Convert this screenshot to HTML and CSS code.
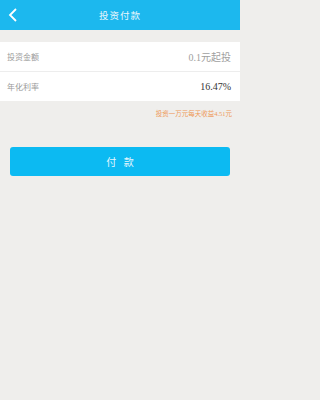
FILE: index.html
```html
<!DOCTYPE html>
<html lang="zh">
<head>
<meta charset="utf-8">
<link rel="stylesheet" href="styles.css">
</head>
<body>
<div class="header">
  <svg class="back" width="12" height="16" viewBox="0 0 12 16"><path d="M9 2 L3 8 L9 14" fill="none" stroke="#fff" stroke-width="1.8"/></svg>
  <div class="title">投资付款</div>
</div>
<div class="list">
  <div class="row">
    <span class="label">投资金额</span>
    <span class="value light">0.1元起投</span>
  </div>
  <div class="row">
    <span class="label">年化利率</span>
    <span class="value dark">16.47%</span>
  </div>
</div>
<div class="note">投资一万元每天收益4.51元</div>
<div class="btnwrap"><div class="btn">付&nbsp;&nbsp;&nbsp;款</div></div>
</body>
</html>
```
FILE: styles.css
```css
html, body { margin: 0; padding: 0; }
body {
  width: 240px; height: 400px;
  background: #efeeec;
  font-family: "Liberation Serif", "Noto Sans CJK SC", serif;
}
.header {
  height: 30px;
  background: #1cb8ee;
  position: relative;
  display: flex;
  align-items: center;
  justify-content: center;
}
.back { position: absolute; left: 7px; top: 7px; }
.title { color: #eaf7fd; font-size: 9.5px; letter-spacing: 1px; }
.list { margin-top: 12px; background: #fff; }
.row {
  height: 29px;
  display: flex;
  align-items: center;
  justify-content: space-between;
  padding: 0 9px 0 7px;
}
.row + .row { border-top: 1px solid #ededed; }
.label { font-size: 8px; color: #9a9a9a; }
.value { font-size: 10px; }
.value.light { color: #a0a0a0; }
.value.dark { color: #333; }
.note {
  text-align: right;
  padding: 7px 8px 0 0;
  font-size: 6.5px;
  color: #ee9a5a;
  height: 11px;
}
.btnwrap { padding: 28px 10px 0; }
.btn {
  height: 29px;
  border-radius: 3px;
  background: #0cbaf2;
  color: #e6f6fd;
  font-size: 10px;
  display: flex;
  align-items: center;
  justify-content: center;
}
```
